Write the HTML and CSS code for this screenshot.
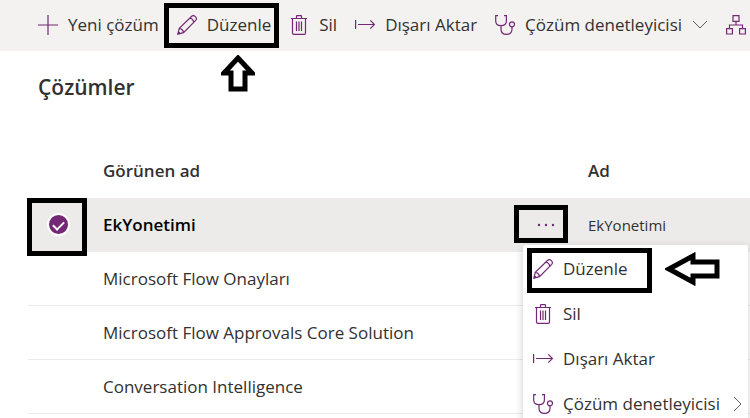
FILE: index.html
```
<!DOCTYPE html>
<html lang="tr">
<head>
    <meta charset="utf-8">
    <title>Çözümler</title>
    <link rel="stylesheet" href="styles.css">
</head>
<body>
    <svg class="sprite" aria-hidden="true">
        <symbol id="icon-plus" viewBox="0 0 20 20">
            <path d="M10 0V20M0 10H20"/>
        </symbol>
        <symbol id="icon-edit" viewBox="0 0 20 20">
            <path d="M.8 19.2L2.3 13.4L14.7 1.2Q16.6 -.2 18.4 1.6Q20.2 3.5 18.7 5.4L6.5 17.7ZM2.3 13.4Q5.8 13.8 6.5 17.7M12.6 3.2Q16.1 3.6 16.7 7.4M.8 19.2L2.8 17.3"/>
        </symbol>
        <symbol id="icon-delete" viewBox="0 0 20 20">
            <path d="M2 3.5H18M7.5 3.5V1.3Q7.5 .6 8.2 .6H11.8Q12.5 .6 12.5 1.3V3.5M3.5 3.5V18Q3.5 19.4 4.9 19.4H15.1Q16.5 19.4 16.5 18V3.5M7.5 6.5V16M10 6.5V16M12.5 6.5V16"/>
        </symbol>
        <symbol id="icon-export" viewBox="0 0 20 20">
            <path d="M.6 5V14M3 9.5H19.5M15.3 5.3L19.5 9.5L15.3 13.7"/>
        </symbol>
        <symbol id="icon-checker" viewBox="0 0 20 20">
            <path d="M3 .6H.7V6Q.7 10.7 6 10.7T11.4 6V.6H9M6 10.7V14Q6 19.4 11.5 19.4T17 14V11.8"/>
            <circle cx="17" cy="9.3" r="2.5"/>
        </symbol>
        <symbol id="icon-tree" viewBox="0 0 20 20">
            <path d="M7 .6H13V6.4H7ZM.6 13.6H6.4V19H.6ZM13.6 13.6H19.4V19H13.6ZM10 6.4V10M3.5 13.6V10H16.5V13.6"/>
        </symbol>
    </svg>

    <nav class="toolbar">
        <button class="command"><svg class="icon"><use href="#icon-plus"/></svg>Yeni çözüm</button>
        <button class="command marked">
            <svg class="icon"><use href="#icon-edit"/></svg>Düzenle
            <svg class="arrow arrow-up" viewBox="0 0 34 37"><path d="M17 3L31 18H24V34H10V18H3Z"/></svg>
        </button>
        <button class="command"><svg class="icon"><use href="#icon-delete"/></svg>Sil</button>
        <button class="command"><svg class="icon"><use href="#icon-export"/></svg>Dışarı Aktar</button>
        <button class="command">
            <svg class="icon"><use href="#icon-checker"/></svg>Çözüm denetleyicisi
            <svg class="chevron" viewBox="0 0 16 16"><path d="M1 4L8 11L15 4"/></svg>
        </button>
        <button class="command" aria-label="Bağımlılıklar"><svg class="icon"><use href="#icon-tree"/></svg></button>
    </nav>

    <main class="content">
        <h1>Çözümler</h1>
        <table class="solutions">
            <thead>
                <tr>
                    <th class="col-check"></th>
                    <th>Görünen ad</th>
                    <th class="col-more"></th>
                    <th class="col-name">Ad</th>
                </tr>
            </thead>
            <tbody>
                <tr class="selected">
                    <td class="col-check"><label class="check-box marked"><input type="checkbox" aria-label="EkYonetimi" checked></label></td>
                    <td>EkYonetimi</td>
                    <td class="col-more">
                        <button class="more marked" aria-label="Diğer komutlar">
                            <svg viewBox="0 0 18 4"><circle cx="2" cy="2" r="1.2"/><circle cx="9" cy="2" r="1.2"/><circle cx="16" cy="2" r="1.2"/></svg>
                        </button>
                        <div class="menu">
                            <button class="menu-item marked">
                                <svg class="icon"><use href="#icon-edit"/></svg>Düzenle
                                <svg class="arrow arrow-left" viewBox="0 0 56 34"><path d="M4 17L28 4V10H52V24H28V30Z"/></svg>
                            </button>
                            <button class="menu-item"><svg class="icon"><use href="#icon-delete"/></svg>Sil</button>
                            <button class="menu-item"><svg class="icon"><use href="#icon-export"/></svg>Dışarı Aktar</button>
                            <button class="menu-item">
                                <svg class="icon"><use href="#icon-checker"/></svg>Çözüm denetleyicisi
                                <svg class="chevron" viewBox="0 0 16 16"><path d="M4 1L11 8L4 15"/></svg>
                            </button>
                        </div>
                    </td>
                    <td class="col-name">EkYonetimi</td>
                </tr>
                <tr><td></td><td>Microsoft Flow Onayları</td><td></td><td></td></tr>
                <tr><td></td><td>Microsoft Flow Approvals Core Solution</td><td></td><td></td></tr>
                <tr><td></td><td>Conversation Intelligence</td><td></td><td></td></tr>
            </tbody>
        </table>
    </main>
</body>
</html>
```
FILE: styles.css
```
* {
    box-sizing: border-box;
}
body {
    margin: 0;
    min-height: 100vh;
    font-family: 'Segoe UI', 'Open Sans', sans-serif;
    font-size: 17px;
    line-height: 24px;
    color: #323130;
    background: #fff;
    overflow: hidden;
}
button {
    border: none;
    padding: 0;
    background: none;
    font: inherit;
    color: inherit;
    cursor: pointer;
}
.sprite {
    display: none;
}
.icon {
    width: 20px;
    height: 20px;
    flex-shrink: 0;
    fill: none;
    stroke: #742774;
    stroke-width: 1.2;
    overflow: visible;
}
.chevron {
    width: 16px;
    height: 16px;
    flex-shrink: 0;
    fill: none;
    stroke: #605e5c;
}

/* Toolbar */
.toolbar {
    display: flex;
    gap: 18px;
    height: 51px;
    padding: 0 0 2px 38px;
    background: #f3f2f1;
}
.command {
    position: relative;
    display: flex;
    align-items: center;
    gap: 10px;
    flex-shrink: 0;
    white-space: nowrap;
}

/* Black frames and arrows that point out the steps */
.marked::before {
    content: "";
    position: absolute;
    border: 5px solid #000;
    pointer-events: none;
}
.command.marked::before {
    inset: 3px -8px 1px -13px;
}
.arrow {
    position: absolute;
    fill: #fff;
    stroke: #000;
    stroke-width: 5;
}
.arrow-up {
    top: 55px;
    left: 44px;
    width: 34px;
    height: 37px;
}
.arrow-left {
    top: 6px;
    left: 142px;
    width: 56px;
    height: 34px;
}

/* Solution list */
.content {
    padding-left: 28px;
}
h1 {
    margin: 0;
    padding: 21px 10px 42px;
    font-size: 21px;
    line-height: 30px;
    font-weight: 600;
}
.solutions {
    width: 100%;
    table-layout: fixed;
    border-spacing: 0;
}
.solutions th,
.solutions td {
    height: 54px;
    padding: 0 0 0 15px;
    text-align: left;
    white-space: nowrap;
}
.solutions th {
    font-weight: 600;
}
.solutions td {
    border-bottom: 1px solid #edebe9;
}
.solutions .selected {
    background: #edebe9;
    color: #000;
    font-weight: 600;
}
.solutions .col-check {
    width: 60px;
    padding: 0;
}
.solutions .col-more {
    position: relative;
    width: 50px;
    padding: 0;
}
.solutions .col-name {
    width: 177px;
}
.selected .col-name {
    font-size: 15px;
    font-weight: 400;
    color: #323130;
}
.check-box {
    position: relative;
    display: flex;
    align-items: center;
    justify-content: center;
    width: 60px;
    height: 53px;
}
.check-box::before {
    inset: 0 1px -5px -1px;
}
.check-box input {
    appearance: none;
    display: flex;
    justify-content: center;
    width: 23px;
    height: 23px;
    margin: 0;
    border: 2px solid #fff;
    border-radius: 50%;
    background: #742774;
}
.check-box input::after {
    content: "";
    width: 5px;
    height: 9px;
    margin-top: 4px;
    border: solid #fff;
    border-width: 0 2px 2px 0;
    transform: rotate(45deg);
}
.more {
    position: relative;
    display: flex;
    align-items: center;
    justify-content: center;
    width: 45px;
    height: 38px;
}
.more::before {
    inset: -1px 0 1px -9px;
}
.more svg {
    width: 18px;
    height: 4px;
    fill: #742774;
}

/* Context menu */
.menu {
    position: absolute;
    top: 47px;
    left: 0;
    z-index: 1;
    width: 225px;
    padding: 1px 0;
    border-radius: 2px;
    background: #fff;
    box-shadow: 0 3px 8px rgba(0, 0, 0, 0.2);
    font-weight: 400;
    color: #323130;
}
.menu-item {
    position: relative;
    display: flex;
    align-items: center;
    gap: 10px;
    width: 100%;
    height: 45px;
    padding-left: 10px;
    white-space: nowrap;
}
.menu-item.marked::before {
    inset: 2px 96px -2px 4px;
}
```
